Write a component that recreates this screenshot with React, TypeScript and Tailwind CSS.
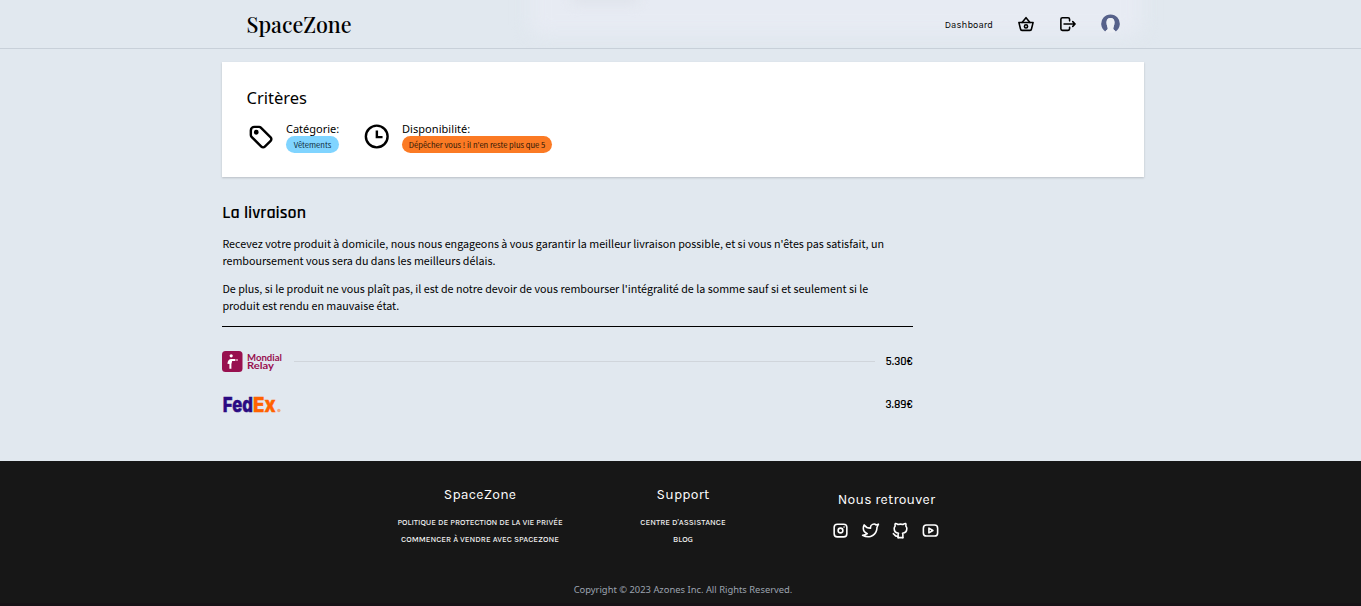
import React from "react";

type IconProps = { className?: string; children: React.ReactNode };

function Icon({ className, children }: IconProps) {
  return (
    <svg
      viewBox="0 0 24 24"
      fill="none"
      stroke="currentColor"
      strokeWidth={2}
      strokeLinecap="round"
      strokeLinejoin="round"
      className={className}
    >
      {children}
    </svg>
  );
}

function Header() {
  return (
    <header className="relative h-[49px] overflow-hidden border-b border-[#c8d0d9] bg-[#e1e8ef]">
      <div className="absolute -top-10 left-[530px] h-[76px] w-[612px] rounded-xl bg-[#e7ebf3] blur-[9px]" />
      <div className="absolute -top-3 left-[572px] h-4 w-[66px] bg-[#dfe3eb] blur-[6px]" />
      <div className="relative flex h-12 items-center pl-[246.5px] pr-[241px]">
        <span className="flex-1 font-['Playfair_Display','Liberation_Serif',serif] text-[21.5px] leading-7 font-medium text-black">
          SpaceZone
        </span>
        <a className="mt-[2px] mr-6 font-[Karla,Inter,sans-serif] text-[9.5px] leading-4 tracking-[0.1px] text-black">
          Dashboard
        </a>
        <Icon className="mr-[23px] size-[19px] -translate-x-[0.5px] -translate-y-[0.5px]">
          <path d="M7 10l5 -6l5 6" />
          <path d="M21 10l-2 8a2 2.5 0 0 1 -2 2h-10a2 2.5 0 0 1 -2 -2l-2 -8z" />
          <circle cx="12" cy="15" r="2" />
        </Icon>
        <Icon className="mr-[23px] size-[19px] -translate-x-[0.5px] -translate-y-[0.5px]">
          <path d="M14 8v-2a2 2 0 0 0 -2 -2h-7a2 2 0 0 0 -2 2v12a2 2 0 0 0 2 2h7a2 2 0 0 0 2 -2v-2" />
          <path d="M7 12h14l-3 -3m0 6l3 -3" />
        </Icon>
        <svg viewBox="0 0 19 19" className="mb-[2px] size-[19px]">
          <path
            d="M4.2 17.4A9.3 9.3 0 1 1 14.8 17.4C13.8 16.4 12.4 16 12.2 14.6C12.1 13.2 13.5 11.5 13.5 8.2C13.5 5.5 11.8 4 9.5 4S5.5 5.5 5.5 8.2C5.5 11.5 6.9 13.2 6.8 14.6C6.6 16 5.2 16.4 4.2 17.4Z"
            fill="#56618a"
          />
          <path
            d="M9.5 4C11.8 4 13.5 5.5 13.5 8.2C13.5 11.5 12.1 13.2 12.2 14.6C12.4 16 13.8 16.4 14.8 17.4Q9.5 20 4.2 17.4C5.2 16.4 6.6 16 6.8 14.6C6.9 13.2 5.5 11.5 5.5 8.2C5.5 5.5 7.2 4 9.5 4Z"
            fill="#eceff4"
          />
        </svg>
      </div>
    </header>
  );
}

function Criteria() {
  return (
    <section className="mt-[13px] ml-[222px] h-[115px] w-[922px] bg-white pt-[25px] pl-[24.5px] shadow-[0_1px_2px_rgba(0,0,0,0.18)]">
      <h2 className="font-['Segoe_UI','Noto_Sans',sans-serif] text-[16.5px] leading-[22px] text-black">
        Critères
      </h2>
      <div className="mt-[13px] flex items-start">
        <Icon className="mr-[11.5px] -ml-px size-[29px]">
          <circle cx="8.5" cy="8.5" r="1" fill="currentColor" />
          <path d="M4 7v3.859c0 .537 .213 1.052 .593 1.432l8.116 8.116a2.025 2.025 0 0 0 2.864 0l4.834 -4.834a2.025 2.025 0 0 0 0 -2.864l-8.117 -8.116a2.025 2.025 0 0 0 -1.431 -.593h-3.859a3 3 0 0 0 -3 3z" />
        </Icon>
        <div className="mr-[23px] flex w-[53px] flex-col items-start">
          <span className="font-['Noto_Sans',sans-serif] text-[11px] leading-[14px] whitespace-nowrap text-black">
            Catégorie:
          </span>
          <span className="h-[17px] w-[53px] rounded-full bg-[#80d4ff] text-center font-['Noto_Sans_CJK_JP',sans-serif] text-[7.6px] leading-[17px] whitespace-nowrap text-[#0b2a3a]">
            Vêtements
          </span>
        </div>
        <Icon className="mr-[11px] size-[29px]">
          <circle cx="12.2" cy="12" r="9" />
          <path d="M12.3 7v5.5h4.700" strokeLinecap="butt" strokeLinejoin="miter" />
        </Icon>
        <div className="flex flex-col items-start">
          <span className="font-['Noto_Sans',sans-serif] text-[11px] leading-[14px] tracking-[0.05px] text-black">
            Disponibilité:
          </span>
          <span className="h-[17px] w-[150px] rounded-full bg-[#fb7a24] text-center font-['Noto_Sans_CJK_JP',sans-serif] text-[7.6px] leading-[17px] whitespace-nowrap text-[#2a1405]">
            Dépêcher vous ! il n'en reste plus que 5
          </span>
        </div>
      </div>
    </section>
  );
}

function MondialRelayLogo() {
  return (
    <svg viewBox="0 0 61 22" className="h-[22px] w-[61px]">
      <rect x="0" y="0" width="20.5" height="21" rx="3.5" fill="#98104f" />
      <circle cx="9.2" cy="4.8" r="1.6" fill="#fff" />
      <path
        d="M8.4 17.8v-4.5c0-1.5 .8-2 .8-4M6.4 12.8c.2-2.4 1.2-3.8 3-3.8h4"
        fill="none"
        stroke="#fff"
        strokeWidth="2"
      />
      <circle cx="15" cy="9.1" r="1" fill="#e9a4c0" />
      <g fill="#98104f" fontFamily="Lato, sans-serif" fontWeight="700" fontSize="9.2">
        <text x="25" y="9.8" textLength="35" lengthAdjust="spacingAndGlyphs">
          Mondial
        </text>
        <text x="25" y="18" textLength="27" lengthAdjust="spacingAndGlyphs">
          Relay
        </text>
      </g>
    </svg>
  );
}

function FedExLogo() {
  return (
    <svg viewBox="0 0 61 20" className="h-5 w-[61px] overflow-visible">
      <g fontFamily="Inter, sans-serif" fontWeight="800" fontSize="20.5" strokeWidth="0.5">
        <text x="0.8" y="16.8" textLength="30" lengthAdjust="spacingAndGlyphs" fill="#2a0a82" stroke="#2a0a82">
          Fed
        </text>
        <text x="31" y="16.8" textLength="22.5" lengthAdjust="spacingAndGlyphs" fill="#ff6200" stroke="#ff6200">
          Ex
        </text>
      </g>
      <circle cx="56.8" cy="15.5" r="1.7" fill="#f0a884" />
    </svg>
  );
}

function Delivery() {
  return (
    <section className="ml-[222px] w-[691px] pt-[25px]">
      <h2 className="pl-[0.3px] font-[Rajdhani,Roboto,sans-serif] text-[18px] leading-[22px] font-semibold text-black">
        La livraison
      </h2>
      <div className="mt-[11px] flex flex-col gap-[11px] pl-[0.4px] font-['Noto_Sans_CJK_JP',sans-serif] text-[10.74px] leading-[17px] whitespace-nowrap text-black">
        <p>
          Recevez votre produit à domicile, nous nous engageons à vous garantir la meilleur livraison possible, et si vous n'êtes pas satisfait, un
          <br />
          remboursement vous sera du dans les meilleurs délais.
        </p>
        <p>
          De plus, si le produit ne vous plaît pas, il est de notre devoir de vous rembourser l'intégralité de la somme sauf si et seulement si le
          <br />
          produit est rendu en mauvaise état.
        </p>
      </div>
      <div className="mt-[12px] h-px bg-black" />
      <div className="mt-6 flex h-[22px] items-center">
        <MondialRelayLogo />
        <div className="mx-[11px] -mt-px h-px flex-1 bg-[#d0d5db]" />
        <span className="font-[Rajdhani,Roboto,sans-serif] text-[12px] font-semibold text-black">5.30€</span>
      </div>
      <div className="mt-[21px] flex h-[22px] items-center justify-between">
        <FedExLogo />
        <span className="font-[Rajdhani,Roboto,sans-serif] text-[12px] font-semibold text-black">3.89€</span>
      </div>
    </section>
  );
}

function FooterColumn({ title, links }: { title: string; links: string[] }) {
  return (
    <div className="flex flex-col items-center">
      <h3 className="text-[14px] leading-[18px] tracking-[0.25px]">{title}</h3>
      <ul className="mt-[10px] text-center text-[8.22px] leading-[17px] font-medium whitespace-nowrap text-[#f0f0f0] uppercase">
        {links.map((link) => (
          <li key={link}>{link}</li>
        ))}
      </ul>
    </div>
  );
}

function Footer() {
  return (
    <footer className="mt-[45px] flex h-[145px] flex-col border-b-[3px] border-[#161216] bg-[#171717] text-white">
      <div className="ml-[378px] grid grid-cols-[204px_202px_205px] pt-[25px] font-[Karla,Inter,sans-serif]">
        <FooterColumn
          title="SpaceZone"
          links={["Politique de protection de la vie privée", "Commencer à vendre avec SpaceZone"]}
        />
        <FooterColumn title="Support" links={["Centre d'assistance", "Blog"]} />
        <div className="flex flex-col items-center pt-[5px]">
          <h3 className="text-[14px] leading-[18px] tracking-[0.22px]">Nous retrouver</h3>
          <div className="mt-[11.5px] mr-[1.5px] flex gap-[11px]">
            <Icon className="size-[19px]">
              <rect x="4" y="4" width="16" height="16" rx="4" />
              <circle cx="12" cy="12" r="3" />
              <path d="M16.5 7.5v.01" />
            </Icon>
            <Icon className="size-[19px]">
              <path d="M22 4.01c-1 .49 -1.98 .689 -3 .99c-1.121 -1.265 -2.783 -1.335 -4.38 -.737s-2.643 2.06 -2.62 3.737v1c-3.245 .083 -6.135 -1.395 -8 -4c0 0 -4.182 7.433 4 11c-1.872 1.247 -3.739 2.088 -6 2c3.308 1.803 6.913 2.423 10.034 1.517c3.58 -1.04 6.522 -3.723 7.651 -7.742a13.84 13.84 0 0 0 .497 -3.753c0 -.249 1.51 -2.772 1.818 -4.013z" />
            </Icon>
            <Icon className="size-[19px]">
              <path d="M9 19c-4.3 1.4 -4.3 -2.5 -6 -3m12 5v-3.5c0 -1 .1 -1.4 -.5 -2c2.8 -.3 5.5 -1.4 5.5 -6a4.6 4.6 0 0 0 -1.3 -3.2a4.2 4.2 0 0 0 -.1 -3.2s-1.1 -.3 -3.5 1.3a12.3 12.3 0 0 0 -6.2 0c-2.4 -1.6 -3.5 -1.3 -3.5 -1.3a4.2 4.2 0 0 0 -.1 3.2a4.6 4.6 0 0 0 -1.3 3.2c0 4.6 2.7 5.7 5.5 6c-.6 .6 -.6 1.2 -.5 2v3.5" />
              <path d="M9 21h6" />
            </Icon>
            <Icon className="size-[19px]">
              <rect x="3" y="5" width="18" height="14" rx="4" />
              <path d="M10 9l5 3l-5 3z" />
            </Icon>
          </div>
        </div>
      </div>
      <p className="mt-[33.5px] pl-[5px] text-center font-['Segoe_UI','Noto_Sans',sans-serif] text-[9.4px] leading-4 text-[#9ca3af]">
        Copyright © 2023 Azones Inc. All Rights Reserved.
      </p>
    </footer>
  );
}

export default function App() {
  return (
    <div className="h-[606px] overflow-hidden bg-[#e1e8ef]">
      <Header />
      <main>
        <Criteria />
        <Delivery />
      </main>
      <Footer />
    </div>
  );
}
